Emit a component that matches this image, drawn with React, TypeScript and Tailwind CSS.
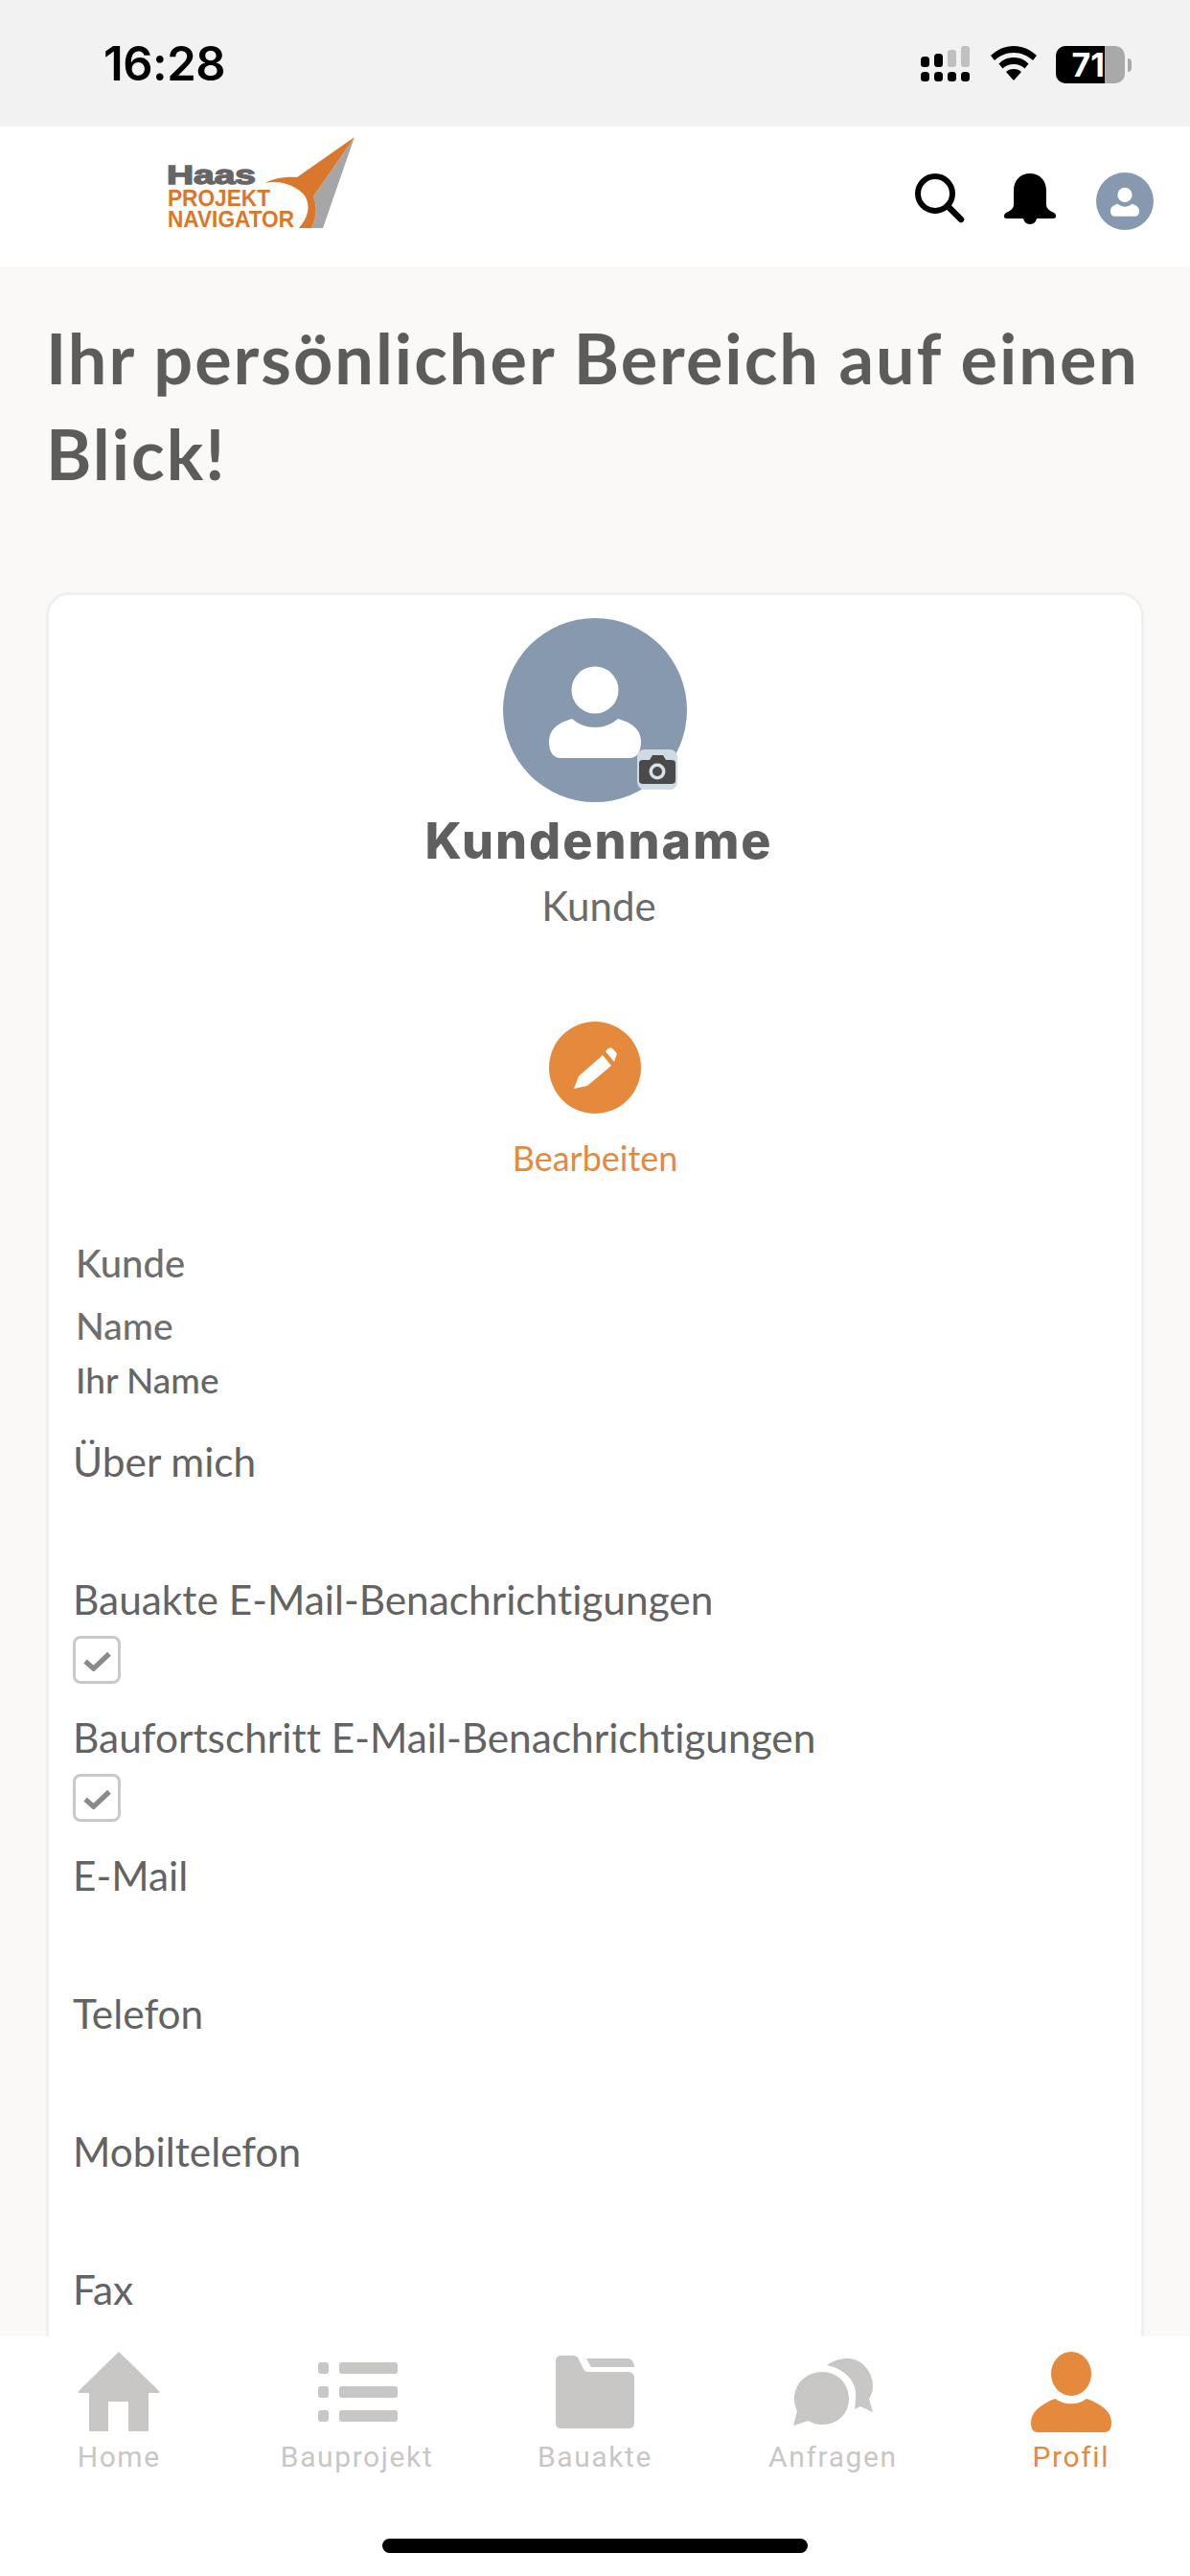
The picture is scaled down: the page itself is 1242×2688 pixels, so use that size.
import React from "react";

const lato = "font-['Lato','Liberation_Sans',sans-serif] [font-variant-ligatures:none]";

function Person({ className }: { className?: string }) {
  return (
    <svg viewBox="0 0 192 192" className={className}>
      <circle cx="96" cy="96" r="96" fill="#8699af" />
      <circle cx="96" cy="75" r="24.5" fill="#fff" />
      <path d="M72 105c7 6 15 9 24 9s17-3 24-9c14 4 24 11 24 24 0 10-4 17-12 17H60c-8 0-12-7-12-17 0-13 10-20 24-24z" fill="#fff" />
    </svg>
  );
}

function Signal() {
  return (
    <svg viewBox="0 0 51 38" className="w-[51px] h-[38px]">
      <g fill="#000">
        <rect x="0" y="27" width="9" height="10" rx="3.5" />
        <rect x="14" y="27" width="9" height="10" rx="3.5" />
        <rect x="28" y="27" width="9" height="10" rx="3.5" />
        <rect x="42" y="27" width="9" height="10" rx="3.5" />
        <rect x="0" y="11" width="9" height="11" rx="3.5" />
        <rect x="14" y="8" width="9" height="14" rx="3.5" />
      </g>
      <g fill="#c0c0c0">
        <rect x="28" y="4" width="9" height="18" rx="3" />
        <rect x="42" y="0" width="9" height="22" rx="3" />
      </g>
    </svg>
  );
}

function Wifi() {
  return (
    <svg viewBox="0 0 48 36" className="w-[48px] h-[36px]">
      <path d="M24 0C15 0 7 3.500 0 10l4 5c5.500-5 12-8 20-8s14.500 3 20 8l4-5C41 3.500 33 0 24 0z" />
      <path d="M24 12c-6 0-11 2-15.500 6.500l4 5C15.500 20.500 19 19 24 19s8.500 1.500 11.500 4.500l4-5C35 14 30 12 24 12z" />
      <path d="M24 24c-3.500 0-6 1-8 3l8 9 8-9c-2-2-4.500-3-8-3z" />
    </svg>
  );
}

function Logo() {
  return (
    <svg viewBox="170 140 204 102" className="w-[204px] h-[102px] mb-[28px]">
      <path d="M370 143L337 238H325C331 225 331 215 327 205Z" fill="#a6a6a6" />
      <path d="M277 191C285 186 298 184 310 185L370 143L327 205C331 215 331 225 325 238H312C321 228 325 215 318 204C308 192 290 188 277 191Z" fill="#d9772d" />
      <text x="174" y="192" fill="#666" fontFamily="Liberation Sans" fontWeight="700" fontSize="28" textLength="93" lengthAdjust="spacingAndGlyphs" stroke="#666" strokeWidth="1.4">Haas</text>
      <text x="175" y="215" fill="#d9772d" fontFamily="Liberation Sans" fontWeight="700" fontSize="24" textLength="107" lengthAdjust="spacingAndGlyphs">PROJEKT</text>
      <text x="175" y="237" fill="#d9772d" fontFamily="Liberation Sans" fontWeight="700" fontSize="24" textLength="132" lengthAdjust="spacingAndGlyphs">NAVIGATOR</text>
    </svg>
  );
}

function Check() {
  return (
    <div className="w-[50px] h-[50px] rounded-[8px] border-[3px] border-[#c9c9c9] bg-white flex items-center justify-center">
      <svg viewBox="0 0 32 24" className="w-[31px] h-[23px]">
        <path d="M3 13l9 8L29 5" fill="none" stroke="#8a8a8a" strokeWidth="5.500" />
      </svg>
    </div>
  );
}

function Tab({ label, active, children }: { label: string; active?: boolean; children: React.ReactNode }) {
  return (
    <div className="flex flex-col items-center">
      {children}
      <span className={`mt-[8px] text-[30px] leading-[36px] tracking-[1.6px] font-['Roboto',sans-serif] ${active ? "text-[#e58a3c]" : "text-[#c8c7c5]"}`}>
        {label}
      </span>
    </div>
  );
}

const field = `${lato} text-[42.4px] leading-[60px] text-[#636363]`;

export default function App() {
  return (
    <div className="w-[1242px] h-[2688px] flex flex-col overflow-hidden bg-[#faf9f7]">
      <div className="h-[132px] shrink-0 bg-[#f2f2f2] flex items-start justify-between pl-[108px] pr-[61px]">
        <span className="mt-[38px] text-[49px] leading-[58px] font-semibold text-black font-['Inter',sans-serif] tracking-[-0.5px]">16:28</span>
        <div className="flex items-start mt-[48px]">
          <Signal />
          <div className="ml-[22px]"><Wifi /></div>
          <div className="ml-[20px] flex items-center">
            <div className="w-[72px] h-[39px] rounded-[10px] overflow-hidden flex bg-[#a9a9a9]">
              <div className="w-[51px] h-full bg-black flex items-center justify-end text-white font-bold text-[34px] leading-[39px] font-['Inter',sans-serif] overflow-hidden">71</div>
            </div>
            <div className="ml-[3px] w-[4px] h-[14px] rounded-r-[4px] bg-[#a9a9a9]" />
          </div>
        </div>
      </div>

      <div className="h-[146px] shrink-0 bg-white flex items-center justify-between pl-[170px] pr-[38px]">
        <Logo />
        <div className="flex items-center mt-[8px]">
          <svg viewBox="0 0 56 56" className="w-[56px] h-[56px] -mt-[6px]">
            <circle cx="24" cy="24" r="18" fill="none" stroke="#000" strokeWidth="6" />
            <path d="M37 37l14 14" stroke="#000" strokeWidth="6.500" strokeLinecap="round" />
          </svg>
          <svg viewBox="0 0 54 54" className="ml-[40px] w-[54px] h-[54px] -mt-[2px]">
            <path d="M27 0c-10 0-17 7-17 18v14c0 4-2 6-8 9-2 1-2 3-2 4s1 2 3 2h48c2 0 3-1 3-2s0-3-2-4c-6-3-8-5-8-9V18C44 7 37 0 27 0z" />
            <path d="M20 47h14c0 4-3 7-7 7s-7-3-7-7z" transform="translate(0 -1)" />
          </svg>
          <Person className="ml-[42px] w-[60px] h-[60px] mt-[2px]" />
        </div>
      </div>

      <main className="flex-1 min-h-0 overflow-hidden px-[48px] pt-[45px]">
        <h1 className="text-[72px] leading-[100px] tracking-[2px] font-bold text-[#5c5c5a] font-['Lato',sans-serif]">
          Ihr persönlicher Bereich auf einen Blick!
        </h1>
        <section className="mt-[95px] w-[1146px] bg-white border-[3px] border-[#f0f0ee] rounded-[24px] pt-[24px] pl-[25px] pb-[140px]">
          <div className="-ml-[25px] flex flex-col items-center">
            <div className="relative w-[192px] h-[192px]">
              <Person className="w-[192px] h-[192px]" />
              <div className="absolute left-[140px] top-[137px] w-[42px] h-[42px] rounded-[8px] bg-[#d0dae3] flex items-center justify-center">
                <svg viewBox="0 0 38 32" className="w-[38px] h-[32px]">
                  <path d="M4 6h7l3-5h11l3 5h6c2 0 4 1 4 3v19c0 2-2 3-4 3H4c-2 0-4-1-4-3V9c0-2 2-3 4-3z" fill="#4a4a4a" />
                  <circle cx="19" cy="18" r="8.500" fill="#d9e1e8" />
                  <circle cx="19" cy="18" r="5" fill="#4a4a4a" />
                </svg>
              </div>
            </div>
            <div className="ml-[8px] mt-[11px] text-[52px] leading-[60px] tracking-[2px] font-extrabold text-[#5f5f5f] font-['Inter',sans-serif]">Kundenname</div>
            <div className={`ml-[8px] mt-[12px] ${lato} text-[42px] leading-[50px] text-[#6b6b6b]`}>Kunde</div>
            <div className="mt-[96px] w-[96px] h-[96px] rounded-full bg-[#e58a3c] flex items-center justify-center">
              <svg viewBox="0 0 46 46" className="w-[46px] h-[46px]">
                <path d="M1 45l5-13L31 10l9 11-25 21-14 3z" fill="#fff" />
                <path d="M34 6l3-3c1.500-1 3-1 4 0l4 4c1 1 1 3 0 4l-2 6z" fill="#fff" />
              </svg>
            </div>
            <div className={`mt-[21px] ${lato} text-[36px] leading-[50px] text-[#e58a3c]`}>Bearbeiten</div>
          </div>

          <div className="mt-[60px] flex flex-col items-start">
            <div className={`ml-[3px] ${lato} font-medium text-[40px] leading-[50px] text-[#6e6e6e]`}>Kunde</div>
            <div className={`ml-[3px] mt-[15px] ${lato} font-medium text-[39px] leading-[50px] text-[#6e6e6e]`}>Name</div>
            <div className={`ml-[3px] mt-[7px] ${lato} font-medium text-[37px] leading-[50px] text-[#666]`}>Ihr Name</div>
            <div className={`mt-[30px] ${field}`}>Über mich</div>
            <div className={`mt-[84px] ${field}`}>Bauakte E-Mail-Benachrichtigungen</div>
            <div className="mt-[8px]"><Check /></div>
            <div className={`mt-[26px] ${field}`}>Baufortschritt E-Mail-Benachrichtigungen</div>
            <div className="mt-[8px]"><Check /></div>
            <div className={`mt-[26px] ${field}`}>E-Mail</div>
            <div className={`mt-[84px] ${field}`}>Telefon</div>
            <div className={`mt-[84px] ${field}`}>Mobiltelefon</div>
            <div className={`mt-[84px] ${field}`}>Fax</div>
          </div>
        </section>
      </main>

      <nav className="h-[250px] shrink-0 bg-white flex flex-col">
        <div className="grid grid-cols-5 pt-[16px]">
          <Tab label="Home">
            <svg viewBox="82 2454 84 84" className="w-[84px] h-[84px]">
              <path d="M124 2454L166 2495V2497H155V2536C155 2537 154 2537 153 2537H134V2506H113V2537H95C94 2537 93 2537 93 2536V2497H82V2495Z" fill="#c8c7c5" />
            </svg>
          </Tab>
          <Tab label="Bauprojekt">
            <svg viewBox="331 2454 84 84" className="w-[84px] h-[84px]">
              <g fill="#c8c7c5">
                <rect x="332" y="2465" width="11" height="12" rx="3" />
                <rect x="332" y="2490" width="11" height="12" rx="3" />
                <rect x="332" y="2515" width="11" height="12" rx="3" />
                <rect x="354" y="2465" width="61" height="12" rx="3" />
                <rect x="354" y="2490" width="61" height="12" rx="3" />
                <rect x="354" y="2515" width="61" height="12" rx="3" />
              </g>
            </svg>
          </Tab>
          <Tab label="Bauakte">
            <svg viewBox="578 2454 84 84" className="w-[84px] h-[84px]">
              <path d="M585 2458H597C600 2458 602 2459 603 2462L608 2472C609 2474 610 2475 613 2475H655C659 2475 661 2478 661 2482V2528C661 2532 659 2534 655 2534H585C581 2534 579 2532 579 2528V2464C579 2460 581 2458 585 2458Z" fill="#c8c7c5" />
              <path d="M611 2461H654C658 2461 661 2465 661 2470H616Z" fill="#c8c7c5" />
            </svg>
          </Tab>
          <Tab label="Anfragen">
            <svg viewBox="826 2454 84 84" className="w-[84px] h-[84px]">
              <path d="M857 2475C873 2475 885 2487 885 2503C885 2519 873 2530 857 2530C851 2530 848 2529 843 2526L827 2531L831 2516C829 2512 828 2508 828 2503C828 2487 841 2475 857 2475Z" fill="#c8c7c5" />
              <path d="M862 2468C870 2462 878 2461 884 2461C899 2461 910 2475 910 2490C910 2496 908 2500 906 2503L910 2517L897 2511L891 2514C892 2508 892 2500 892 2495C890 2482 878 2471 862 2468Z" fill="#c8c7c5" />
            </svg>
          </Tab>
          <Tab label="Profil" active>
            <svg viewBox="1075 2454 84 84" className="w-[84px] h-[84px]">
              <ellipse cx="1117" cy="2477" rx="21" ry="23" fill="#e58a3c" />
              <path d="M1100 2503C1110 2510 1124 2510 1133 2503C1150 2509 1159 2517 1159 2528C1159 2534 1157 2538 1152 2538H1082C1077 2538 1075 2534 1075 2528C1075 2517 1085 2509 1100 2503Z" fill="#e58a3c" />
            </svg>
          </Tab>
        </div>
        <div className="mt-[67px] mx-auto w-[444px] h-[15px] rounded-full bg-black" />
      </nav>
    </div>
  );
}
